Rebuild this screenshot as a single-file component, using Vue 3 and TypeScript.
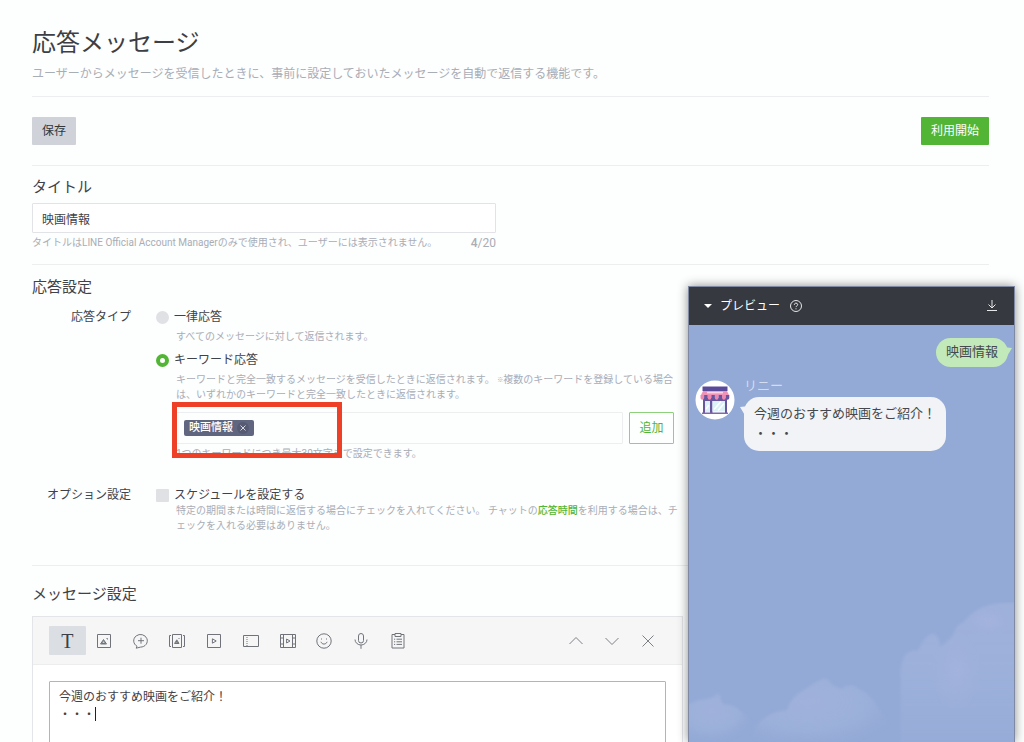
<script setup lang="ts">
import { computed, ref } from 'vue'

interface Tool {
  id: string
  label: string
  path: string
}

const title = ref('映画情報')
const replyType = ref<'all' | 'keyword'>('keyword')
const keywords = ref<string[]>(['映画情報'])
const draft = ref('')
const useSchedule = ref(false)
const message = ref('今週のおすすめ映画をご紹介！\n・・・')
const activeTool = ref('text')
const titleLength = computed(() => title.value.length)

const tools: Tool[] = [
  { id: 'text', label: 'テキスト', path: '' },
  { id: 'photo', label: '写真', path: 'M3.5 3.5h13v13h-13zM6.5 13L9.5 8.5 12.5 13zM7.5 12.5L9.5 9.5 11.5 12.5zM9 11.5v1M12.5 7.5h1v1' },
  { id: 'sticker', label: 'スタンプ', path: 'M6 15.2A6.8 6.3 0 1 1 9.5 16.1L5.2 17.2zM7 9.7h6M10 6.7v6' },
  { id: 'richmessage', label: 'リッチメッセージ', path: 'M5.5 3.5h9v13h-9zM4 4.5H2.5v11H4M16 4.5h1.5v11H16M7.5 12.5L9.8 8.8 12 12.5zM8.7 12L9.8 10 11 12zM11.5 7.5h1' },
  { id: 'richvideo', label: 'リッチビデオ', path: 'M3.5 3.5h13v13h-13zM8.4 7.8v4.4l3.8-2.2z' },
  { id: 'coupon', label: 'クーポン', path: 'M2.5 4.5h15v11h-15zM6 6v1M6 8v1M6 10v1M6 12v1M6 14v1' },
  { id: 'video', label: '動画', path: 'M2.5 3.5h15v13h-15zM5.5 3.5v13M14.5 3.5v13M2.5 7h3M2.5 13h3M14.5 7h3M14.5 13h3M8.6 8v4l3.4-2z' },
  { id: 'emoji', label: '絵文字', path: 'M17.2 10a7.2 7.2 0 1 1-14.4 0a7.2 7.2 0 0 1 14.4 0zM7 8h1M12 8h1M6.9 10.8c1 3 5.2 3 6.2 0' },
  { id: 'voice', label: 'ボイスメッセージ', path: 'M7.5 5a2.5 2.5 0 0 1 5 0v4.5a2.5 2.5 0 0 1-5 0zM4 8.5a6 5.5 0 0 0 12 0M10 14v3.8' },
  { id: 'research', label: 'リサーチ', path: 'M7 3.5H4v13.5h12V3.5h-3M7 2.5h6v3H7zM6 8.2h1.2M8.5 8.2h5.5M6 10.8h1.2M8.5 10.8h5.5M6 13.4h1.2M8.5 13.4h5.5' },
]

const actions: Tool[] = [
  { id: 'up', label: '上へ移動', path: 'M3.5 13L10 6.5 16.5 13' },
  { id: 'down', label: '下へ移動', path: 'M3.5 7L10 13.5 16.5 7' },
  { id: 'close', label: '削除', path: 'M4.5 4.5l11 11M15.5 4.5l-11 11' },
]

function addKeyword() {
  const word = draft.value.trim()
  if (word) keywords.value.push(word)
  draft.value = ''
}
</script>

<template>
  <main class="page">
    <header class="head">
      <h1>応答メッセージ</h1>
      <p>ユーザーからメッセージを受信したときに、事前に設定しておいたメッセージを自動で返信する機能です。</p>
    </header>

    <div class="commands">
      <button type="button" class="btn save">保存</button>
      <button type="button" class="btn start">利用開始</button>
    </div>

    <section class="title-section">
      <h2><label for="title">タイトル</label></h2>
      <input id="title" v-model="title" class="title-input" type="text" maxlength="20" />
      <div class="title-notes">
        <span>タイトルはLINE Official Account Managerのみで使用され、ユーザーには表示されません。</span>
        <span class="count"><b>{{ titleLength }}</b>/20</span>
      </div>
    </section>

    <section class="settings">
      <h2>応答設定</h2>
      <div class="row">
        <div class="row-label">応答タイプ</div>
        <div>
          <label class="choice"><input v-model="replyType" type="radio" name="reply" value="all" />一律応答</label>
          <p class="help first">すべてのメッセージに対して返信されます。</p>
          <label class="choice"><input v-model="replyType" type="radio" name="reply" value="keyword" />キーワード応答</label>
          <p class="help">キーワードと完全一致するメッセージを受信したときに返信されます。 <small>※</small>複数のキーワードを登録している場合<br />は、いずれかのキーワードと完全一致したときに返信されます。</p>
          <div class="keywords">
            <div class="keyword-line">
              <div class="keyword-box">
                <span v-for="(word, i) in keywords" :key="word" class="tag">
                  {{ word }}
                  <button type="button" aria-label="キーワードを削除" @click="keywords.splice(i, 1)">
                    <svg viewBox="0 0 12 12"><path d="M3.5 3.5l5 5M8.5 3.5l-5 5" /></svg>
                  </button>
                </span>
                <input v-model="draft" type="text" aria-label="キーワード" @keyup.enter="addKeyword" />
              </div>
              <button type="button" class="add" @click="addKeyword">追加</button>
            </div>
            <p class="limit">1つのキーワードにつき最大30文字まで設定できます。</p>
            <span class="highlight"></span>
          </div>
        </div>
      </div>
      <div class="row option">
        <div class="row-label">オプション設定</div>
        <div>
          <label class="choice"><input v-model="useSchedule" type="checkbox" />スケジュールを設定する</label>
          <p class="help tight">特定の期間または時間に返信する場合にチェックを入れてください。 チャットの<a href="#hours">応答時間</a>を利用する場合は、チ<br />ェックを入れる必要はありません。</p>
        </div>
      </div>
    </section>

    <section class="message">
      <h2>メッセージ設定</h2>
      <div class="editor">
        <div class="toolbar">
          <div class="tools">
            <button
              v-for="tool in tools"
              :key="tool.id"
              type="button"
              :class="{ active: tool.id === activeTool }"
              :aria-label="tool.label"
              @click="activeTool = tool.id"
            >
              <span v-if="tool.id === 'text'" class="letter">T</span>
              <svg v-else viewBox="0 0 20 20"><path :d="tool.path" /></svg>
            </button>
          </div>
          <div class="actions">
            <button v-for="action in actions" :key="action.id" type="button" :aria-label="action.label">
              <svg viewBox="0 0 20 20"><path :d="action.path" /></svg>
            </button>
          </div>
        </div>
        <div class="writing">
          <textarea v-model="message" aria-label="メッセージ" rows="6"></textarea>
          <span class="caret"></span>
        </div>
      </div>
    </section>
  </main>

  <aside class="preview">
    <header class="preview-head">
      <svg class="fold" viewBox="0 0 8 4"><path d="M0 0h8L4 4z" /></svg>
      <span>プレビュー</span>
      <svg class="question" viewBox="0 0 14 14">
        <circle cx="7" cy="7" r="5.5" />
        <path d="M5.3 5.8c0-2.3 3.5-2.2 3.4 0c0 1-1.7 1.1-1.7 2.3M7 9.3v1" />
      </svg>
      <button type="button" aria-label="ダウンロード">
        <svg viewBox="0 0 14 14"><path d="M7 1v7.5M3.5 5.5L7 9l3.5-3.5M2 11.5h10" /></svg>
      </button>
    </header>
    <div class="chat">
      <svg class="sky" viewBox="0 0 326 140" preserveAspectRatio="none">
        <defs>
          <linearGradient id="mist" x1="0" y1="0" x2="0" y2="1">
            <stop offset="0" stop-color="#a6b6de" stop-opacity=".6" />
            <stop offset=".5" stop-color="#a3b6dd" stop-opacity=".55" />
            <stop offset="1" stop-color="#a0b5dc" stop-opacity=".25" />
          </linearGradient>
          <radialGradient id="drift" cx=".4" cy=".35" r=".65">
            <stop offset="0" stop-color="#a6b5dd" stop-opacity=".7" />
            <stop offset=".6" stop-color="#a2b6dc" stop-opacity=".55" />
            <stop offset="1" stop-color="#a0b5dc" stop-opacity="0" />
          </radialGradient>
          <radialGradient id="puff">
            <stop offset="0" stop-color="#a9b5df" stop-opacity=".5" />
            <stop offset="1" stop-color="#a9b5df" stop-opacity="0" />
          </radialGradient>
          <filter id="soft" x="-10%" y="-10%" width="120%" height="120%"><feGaussianBlur stdDeviation="1.5" /></filter>
        </defs>
        <g filter="url(#soft)">
          <path fill="url(#drift)" d="M-5 106q7-7 15-8q8-1 14-3q4-5 7-3q1 6 3 10q11 0 17 6q9 6 12 14q-4 8-14 18H-5z" />
          <path fill="url(#drift)" d="M60 145q4-20 14-28q10-8 24-9q5-14 17-20q10-7 20-12q5 0 8 6q6 3 10 5q8-8 18 0q12 5 20 20q12 15 16 38z" />
          <path fill="url(#mist)" d="M212 146V76q-1-12 4-22q4-6 14-6q4-12 14-17q8 2 8 14q6-4 13-12q2-10 10-13q7-8 14-12q16-10 46-7V146z" />
          <ellipse cx="268" cy="70" rx="24" ry="40" fill="url(#puff)" />
          <ellipse cx="300" cy="19" rx="22" ry="14" fill="url(#puff)" />
        </g>
      </svg>
      <div class="outgoing"><p class="bubble sent">映画情報</p></div>
      <div class="incoming">
        <svg class="avatar" viewBox="0 0 40 40">
          <circle cx="20" cy="20" r="19.5" fill="#fff" />
          <path fill="#5a4a9a" d="M7.5 6.5h25V11h-25z" />
          <path fill="#f093b9" d="M8 11h24l2 4H6z" />
          <path fill="#fbd5e5" d="M12 11.8h16v1.6H12z" />
          <path fill="#6a559f" d="M8 18h24v3H8z" />
          <path fill="#6a559f" d="M8 18h2v16H8zM30 18h2v16h-2zM15 18h2.5v16H15z" />
          <path fill="#d9f1f7" d="M10 21h5v11h-5zM17.5 21H30v10.5H17.5z" />
          <path stroke="#fff" stroke-width="1.5" d="M19 29.5l7-8M23 30.5l6-7M11 29l3-4" />
          <path fill="#7d69ad" d="M7 32.5h26V34H7z" />
          <path fill="#f087ae" d="M5.5 15h3.6v3a1.8 1.8 0 0 1-3.6 0zM12.7 15h3.6v3a1.8 1.8 0 0 1-3.6 0zM19.9 15h3.6v3a1.8 1.8 0 0 1-3.6 0zM27.1 15h3.6v3a1.8 1.8 0 0 1-3.6 0z" />
          <path fill="#6a559f" d="M9.1 15h3.6v3a1.8 1.8 0 0 1-3.6 0zM16.3 15h3.6v3a1.8 1.8 0 0 1-3.6 0zM23.5 15h3.6v3a1.8 1.8 0 0 1-3.6 0zM30.7 15h3.6v3a1.8 1.8 0 0 1-3.6 0z" />
        </svg>
        <div>
          <p class="sender">リニー</p>
          <p class="bubble received">{{ message }}</p>
        </div>
      </div>
    </div>
  </aside>
</template>

<style>
body {
  margin: 0;
  overflow: hidden;
  background: #fdfefe;
}
</style>

<style scoped>
.page,
.preview {
  font-family: Roboto, "Noto Sans CJK JP", sans-serif;
  font-size: 12px;
  line-height: 20px;
  color: #3f4248;
}
* {
  box-sizing: border-box;
}
button,
input,
textarea {
  margin: 0;
  font: inherit;
  color: inherit;
}
button {
  padding: 0;
  border: 0;
  background: none;
  cursor: pointer;
}
h1,
h2,
p {
  margin: 0;
  font-weight: 400;
}
svg {
  display: block;
  fill: none;
}
.page {
  padding: 25px 35px 0 32px;
}
h1 {
  font-size: 24px;
  line-height: 36px;
  color: #3c3f45;
}
h2 {
  font-size: 15px;
  line-height: 24px;
}
.head {
  padding-bottom: 12px;
  border-bottom: 1px solid #eceef0;
}
.head p {
  margin-top: 3px;
  color: #a9adb6;
}
.commands {
  display: flex;
  justify-content: space-between;
  padding: 20px 0;
  border-bottom: 1px solid #eceef0;
}
.btn {
  height: 28px;
  padding: 0 10px;
  border-radius: 1px;
}
.save {
  background: #cfd2d8;
  color: #33363b;
}
.start {
  background: #53b535;
  color: #fff;
}
.title-section {
  padding: 9px 0 11px;
  border-bottom: 1px solid #eceef0;
}
.title-input {
  display: block;
  width: 464px;
  height: 30px;
  margin-top: 4px;
  padding: 0 9px;
  border: 1px solid #e1e3e6;
  border-radius: 1px;
  background: #fff;
}
.title-notes {
  display: flex;
  justify-content: space-between;
  width: 464px;
  font-size: 10px;
  color: #a9adb6;
}
.count {
  font-size: 12px;
}
.count b {
  font-weight: 500;
}
.settings {
  padding: 10px 0 32px;
  border-bottom: 1px solid #eceef0;
}
.row {
  display: grid;
  grid-template-columns: 99px 1fr;
  column-gap: 25px;
  margin-top: 8px;
}
.row-label {
  text-align: right;
}
.choice {
  display: flex;
  align-items: center;
  gap: 5px;
}
.choice input {
  appearance: none;
  width: 13px;
  height: 13px;
  background: #dfe1e5;
}
.choice input[type='radio'] {
  border-radius: 50%;
}
.choice input[type='radio']:checked {
  border: 4px solid #53b535;
  background: #fff;
}
.choice input[type='checkbox'] {
  border-radius: 1px;
}
.choice input[type='checkbox']:checked {
  background: #53b535;
}
.help,
.limit {
  font-size: 10px;
  line-height: 15px;
  color: #a9adb6;
  white-space: nowrap;
}
.help {
  margin: 2px 0 0 20px;
}
.first {
  margin-bottom: 6px;
}
.tight {
  margin-top: -2px;
}
.help small {
  font-size: 6px;
  vertical-align: 1px;
}
.help a {
  color: #53b535;
  font-weight: 500;
  text-decoration: none;
}
.keywords {
  position: relative;
  width: 498px;
  margin: 10px 0 0 20px;
}
.keyword-line {
  display: flex;
  gap: 6px;
}
.keyword-box {
  display: flex;
  flex: 1;
  align-items: center;
  gap: 6px;
  height: 32px;
  padding: 0 7px;
  border: 1px solid #eceef0;
  border-radius: 1px;
}
.keyword-box input {
  flex: 1;
  min-width: 0;
  border: 0;
  outline: 0;
  background: none;
}
.tag {
  display: flex;
  align-items: center;
  gap: 4px;
  height: 16px;
  padding: 0 5px;
  border-radius: 2px;
  background: #616680;
  color: #fff;
  font-size: 11px;
  font-weight: 500;
  line-height: 16px;
}
.tag button {
  width: 12px;
  height: 12px;
  border-radius: 50%;
  background: #565b73;
}
.tag svg {
  stroke: #d5d7df;
}
.add {
  width: 45px;
  height: 32px;
  border: 1px solid #8fd07c;
  border-radius: 1px;
  color: #53b535;
}
.limit {
  margin-top: 2px;
}
.highlight {
  position: absolute;
  top: -10px;
  left: -4px;
  width: 170px;
  height: 56px;
  border: 5px solid #ee4026;
  pointer-events: none;
}
.option {
  margin-top: 24px;
}
.message {
  padding-top: 16px;
}
.editor {
  margin: 10px 306px 0 0;
  border: 1px solid #e3e5e9;
  background: #fff;
}
.toolbar {
  display: flex;
  align-items: center;
  justify-content: space-between;
  height: 48px;
  padding: 0 16px;
  border-bottom: 1px solid #eceded;
  background: #f6f6f7;
}
.tools {
  display: grid;
  grid-template-columns: repeat(10, 1fr);
  width: 367px;
}
.tools button,
.actions button {
  display: flex;
  align-items: center;
  justify-content: center;
  height: 29px;
}
.tools .active {
  border-radius: 1px;
  background: #dbdfe3;
}
.tools svg {
  width: 20px;
  height: 20px;
  stroke: #70747a;
}
.letter {
  font-family: "Liberation Serif", serif;
  font-size: 20px;
  line-height: 28px;
  color: #3c3f45;
}
.actions {
  display: flex;
}
.actions button {
  width: 36px;
}
.actions svg {
  width: 20px;
  height: 20px;
  stroke: #7d8085;
}
.writing {
  position: relative;
  padding: 16px;
}
textarea {
  display: block;
  width: 100%;
  padding: 6px 9px;
  border: 1px solid #b0b4c2;
  border-radius: 1px;
  outline: 0;
  background: #fff;
  line-height: 18px;
  resize: none;
}
.caret {
  position: absolute;
  top: 42px;
  left: 62px;
  width: 1px;
  height: 14px;
  background: #222;
}
.preview {
  position: fixed;
  top: 286px;
  right: 9px;
  bottom: 0;
  display: flex;
  flex-direction: column;
  width: 327px;
  border: 1px solid #7f89a4;
  border-bottom: 0;
  box-shadow: 0 0 10px rgba(0, 0, 0, 0.45);
  box-sizing: border-box;
}
.preview-head {
  display: flex;
  align-items: center;
  height: 38px;
  padding: 0 15px;
  background: #36393f;
  color: #fff;
}
.fold {
  width: 8px;
  height: 4px;
  margin-right: 8px;
  fill: #fff;
}
.question {
  width: 14px;
  height: 14px;
  margin-left: 9px;
  stroke: #e6e7e9;
}
.preview-head button {
  margin-left: auto;
}
.preview-head button svg {
  width: 14px;
  height: 14px;
  stroke: #e6e7e9;
}
.chat {
  position: relative;
  flex: 1;
  padding: 13px 6px;
  background: #93a9d6;
}
.sky {
  position: absolute;
  bottom: 0;
  left: 0;
  width: 100%;
  height: 140px;
}
.outgoing {
  display: flex;
  justify-content: flex-end;
}
.bubble {
  position: relative;
  width: max-content;
  border-radius: 15px;
  font-size: 13px;
  color: #45484e;
  white-space: pre-line;
}
.bubble::before {
  content: '';
  position: absolute;
  width: 9px;
  height: 10px;
}
.sent {
  padding: 4px 10px 5px;
  background: #c2e9b9;
}
.sent::before {
  top: 9px;
  right: -4px;
  background: #c2e9b9;
  clip-path: polygon(0 0, 100% 10%, 40% 100%, 0 100%);
}
.incoming {
  display: flex;
  align-items: flex-start;
  gap: 9px;
  margin-top: 9px;
}
.avatar {
  width: 40px;
  height: 40px;
  margin-top: 4px;
}
.sender {
  font-size: 13px;
  color: #d3dcf0;
}
.received {
  margin-top: 1px;
  padding: 7px 10px;
  background: #f1f3f6;
}
.received::before {
  top: 9px;
  left: -4px;
  background: #f1f3f6;
  clip-path: polygon(0 10%, 100% 0, 100% 100%, 60% 100%);
}
</style>
